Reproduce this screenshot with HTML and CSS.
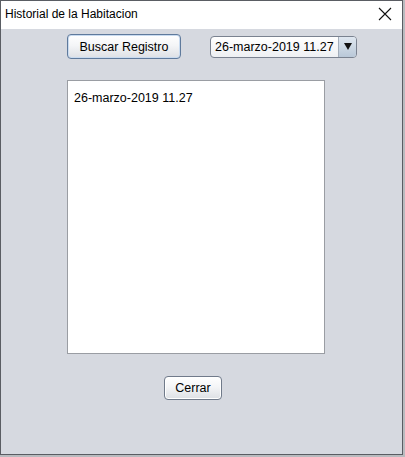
FILE: index.html
```html
<!DOCTYPE html>
<html lang="es">
<head>
    <meta charset="UTF-8">
    <title>Historial de la Habitacion</title>
    <link rel="stylesheet" href="styles.css">
</head>
<body>
    <div class="window">
        <div class="title-bar">
            <span class="title">Historial de la Habitacion</span>
            <span class="close">
                <svg width="14" height="14" viewBox="0 0 14 14">
                    <path d="M1 1 L13 13 M13 1 L1 13" stroke="#111" stroke-width="1.1" fill="none"/>
                </svg>
            </span>
        </div>

        <div class="content">
            <div class="top-row">
                <button class="btn btn-search">Buscar Registro</button>
                <div class="combo">
                    <span class="combo-text">26-marzo-2019 11.27</span>
                    <span class="combo-arrow">
                        <svg width="8" height="7" viewBox="0 0 8 7">
                            <path d="M0 0 L8 0 L4 7 Z" fill="#111"/>
                        </svg>
                    </span>
                </div>
            </div>

            <div class="list">
                <div class="list-item">26-marzo-2019 11.27</div>
            </div>

            <button class="btn btn-close">Cerrar</button>
        </div>
    </div>
</body>
</html>
```

FILE: styles.css
```css
body {
    margin: 0;
    width: 405px;
    height: 457px;
    background: #b9bbbf;
    font-family: 'Liberation Sans', Arial, sans-serif;
    overflow: hidden;
}

.window {
    width: 401px;
    height: 453px;
    border: 1px solid #5a5d63;
    background: #d6d9e0;
    display: flex;
    flex-direction: column;
}

.title-bar {
    height: 28px;
    background: #fff;
    display: flex;
    align-items: center;
    justify-content: space-between;
    padding: 0 10px 0 4px;
}

.title {
    font-size: 12px;
    color: #000;
    padding-bottom: 2px;
}

.close {
    display: flex;
    padding-bottom: 2px;
}

.content {
    flex: 1;
    padding: 5px 0 0 66px;
}

.top-row {
    display: flex;
    align-items: center;
    gap: 29px;
}

.btn {
    font-family: 'Liberation Sans', Arial, sans-serif;
    font-size: 12.5px;
    color: #000;
    border: 1px solid #707a8a;
    border-radius: 4px;
    background: linear-gradient(#ffffff, #f4f5f7 45%, #dde0e5);
    padding: 0;
    box-shadow: inset 0 0 0 1px #fff;
}

.btn-search {
    width: 114px;
    height: 25px;
    border-color: #5f7a9c;
    box-shadow: inset 0 0 0 1px #c9dbf0;
}

.combo {
    width: 147px;
    height: 22px;
    box-sizing: border-box;
    border: 1px solid #7a8290;
    border-radius: 4px;
    background: linear-gradient(#ffffff, #eef0f3);
    display: flex;
    align-items: center;
    overflow: hidden;
}

.combo-text {
    flex: 1;
    font-size: 12.5px;
    white-space: nowrap;
    padding-left: 4px;
}

.combo-arrow {
    width: 17px;
    height: 100%;
    border-left: 1px solid #a3adba;
    background: linear-gradient(#dfe7f0, #b9c8d8);
    display: flex;
    align-items: center;
    justify-content: center;
}

.list {
    width: 256px;
    height: 272px;
    margin-top: 21px;
    background: #fff;
    border: 1px solid #9a9da3;
}

.list-item {
    font-size: 12.5px;
    padding: 10px 0 0 6px;
}

.btn-close {
    display: block;
    width: 58px;
    height: 24px;
    margin: 22px 0 0 97px;
}
```
